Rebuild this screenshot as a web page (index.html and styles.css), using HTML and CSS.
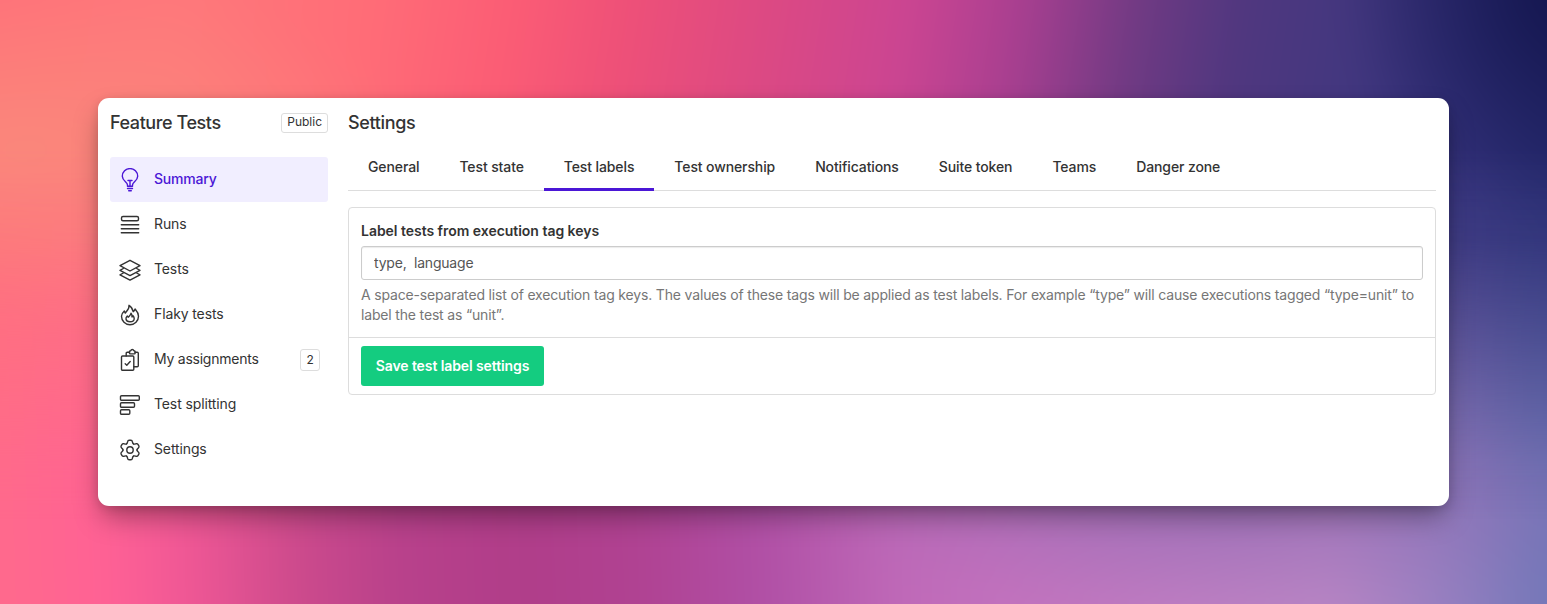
FILE: index.html
```html
<!DOCTYPE html>
<html lang="en">
<head>
<meta charset="utf-8">
<title>Feature Tests – Settings</title>
<link rel="stylesheet" href="styles.css">
</head>
<body>
<div class="page">
<div class="card">
  <aside class="sidebar">
    <div class="suite-head"><h2 class="heading suite-name">Feature Tests</h2><span class="badge">Public</span></div>
    <nav class="nav">
      <a class="nav-item active"><svg class="icon" viewBox="0 0 24 24"><path d="M9.500 18.200v-1.300c0-2.500-5.200-4.200-5.200-8.600a7.700 7.700 0 0 1 15.400 0c0 4.400-5.200 6.100-5.200 8.600v1.300z"/><path d="M10 12.500h4M12 12.500v5.700M9.500 20.500h5M10.700 22.700h2.600"/></svg><span>Summary</span></a>
      <a class="nav-item"><svg class="icon" viewBox="0 0 24 24"><rect x="3.500" y="3.500" width="17" height="4.200" rx="1.500"/><path d="M3.300 11.700h17.400M3.300 15.700h17.400M3.300 19.700h17.400"/></svg><span>Runs</span></a>
      <a class="nav-item"><svg class="icon" viewBox="0 0 24 24"><path d="M12 2.300 22 7.700 12 13 2 7.700z"/><path d="M5.300 10.500 2 12.300l10 5.300 10-5.300-3.300-1.800"/><path d="M5.300 15 2 16.800l10 5.300 10-5.300-3.300-1.800"/></svg><span>Tests</span></a>
      <a class="nav-item"><svg class="icon" viewBox="0 0 24 24"><path d="M11 2.300c.7 3.200-2.200 5.400-3.700 7.800-.5-.8-.8-1.500-1-2.200C4.500 9.500 3.500 11.500 3.500 13.300a8.500 8.500 0 0 0 17 0c0-3.600-2-5.700-3.400-7.300-.3 1.200-1 2.100-1.900 2.700C14.700 6 13.300 3.600 11 2.300z"/><path d="M13 10.300c-.1 1.600-1.700 2.500-2.700 3.900-.5-.4-.8-.7-1-1.200-1 1-1.500 2-1.300 3.100.3 1.700 1.900 2.700 4 2.700 2.400 0 4.200-1.300 4.200-3.400 0-1.200-.6-2-1.200-2.700-.2.600-.5.900-1 1.200.1-1.400-.1-2.600-1-3.600z"/></svg><span>Flaky tests</span></a>
      <a class="nav-item"><svg class="icon" viewBox="0 0 24 24"><path d="M8.200 8V5.300q0-1 1-1h2.300M17 4.300h2.300q1 0 1 1v12.500q0 1-1 1h-3.500"/><path d="M11.500 3.700c0-.6.400-1 1-1h.2c.3-.8.800-1.200 1.600-1.200s1.300.4 1.600 1.200h.2c.6 0 1 .4 1 1v1.500q0 .7-.7.700h-4.200q-.7 0-.7-.7z"/><rect x="3.500" y="8" width="12.300" height="14.200" rx="1"/><path d="m7.200 15.700 1.600 1.500 3.400-3.700"/></svg><span class="wide">My assignments</span><span class="count">2</span></a>
      <a class="nav-item"><svg class="icon" viewBox="0 0 24 24"><rect x="2.500" y="2.700" width="18.800" height="4.500" rx="1"/><rect x="2.500" y="9.700" width="14" height="4.500" rx="1"/><rect x="2.500" y="16.700" width="9.300" height="4.500" rx="1"/></svg><span>Test splitting</span></a>
      <a class="nav-item"><svg class="icon" viewBox="0 0 24 24"><circle cx="12" cy="12" r="3.200"/><path id="tooth" d="M8.500 5.940C9.400 5.400 9.400 4.500 9.600 3.700Q9.900 2.300 11.100 2.300H12.900Q14.100 2.300 14.400 3.700C14.600 4.500 14.600 5.400 15.500 5.940"/><use href="#tooth" transform="rotate(60 12 12)"/><use href="#tooth" transform="rotate(120 12 12)"/><use href="#tooth" transform="rotate(180 12 12)"/><use href="#tooth" transform="rotate(240 12 12)"/><use href="#tooth" transform="rotate(300 12 12)"/></svg><span>Settings</span></a>
    </nav>
  </aside>
  <main class="main">
    <h1 class="heading">Settings</h1>
    <nav class="tabs">
      <a class="tab">General</a><a class="tab">Test state</a><a class="tab selected">Test labels</a><a class="tab">Test ownership</a><a class="tab">Notifications</a><a class="tab">Suite token</a><a class="tab">Teams</a><a class="tab">Danger zone</a>
    </nav>
    <form class="panel">
      <div class="panel-body">
        <label class="label" for="keys">Label tests from execution tag keys</label>
        <input class="input" id="keys" type="text" value="type,  language">
        <p class="help">A space-separated list of execution tag keys. The values of these tags will be applied as test labels. For example “type” will cause executions tagged “type=unit” to label the test as “unit”.</p>
      </div>
      <div class="panel-foot"><button class="save" type="button">Save test label settings</button></div>
    </form>
  </main>
</div>
</div>
</body>
</html>
```
FILE: styles.css
```css
* { box-sizing: border-box; }
body { margin: 0; }
.page {
  width: 1547px;
  height: 604px;
  padding: 98px;
  overflow: clip;
  position: relative;
  isolation: isolate;
  font: 14px/20px Inter, "Liberation Sans", sans-serif;
  color: #333;
}
/* Two soft colour fields: ::after runs along the bottom, ::before fades down over it. */
.page::before,
.page::after {
  content: "";
  position: absolute;
  inset: -60px;
  z-index: -1;
  filter: blur(20px);
}
.page::after {
  z-index: -2;
  background:
    radial-gradient(ellipse 420px 110px at 1290px 560px, #8a66b0a0, #8a66b000),
    linear-gradient(88deg, #ff6a8c 62px, #ff6195 172px, #ef5795 252px, #cc4a8c 362px, #b8418b 462px, #b03d89 582px, #b04292 702px, #b04fa5 822px, #bf69b8 962px, #c271bd 1062px, #be7dc2 1242px, #b885c4 1392px, #9b80c1 1492px, #7477b8 1609px);
}
.page::before {
  background:
    radial-gradient(ellipse 400px 170px at 80px 210px, #fa887b, #fa887b00),
    radial-gradient(ellipse 250px 260px at 1650px 30px, #11134b 0, #13154dd0 30%, #13154d00),
    linear-gradient(99deg, #ff717a 69px, #fe787b 249px, #ff6c77 439px, #fb5c75 579px, #ee5078 689px, #dc4983 829px, #cb4592 969px, #a83f90 1079px, #703a83 1194px, #50377f 1294px, #42377f 1419px, #35327c 1519px, #292d73 1629px);
  -webkit-mask-image: linear-gradient(#000 0 210px, #000d 300px, #0007 420px, #0002 520px, transparent 580px);
  mask-image: linear-gradient(#000 0 210px, #000d 300px, #0007 420px, #0002 520px, transparent 580px);
}
.card {
  display: flex;
  gap: 20px;
  width: 1351px;
  height: 408px;
  padding: 12px 13px 0 12px;
  border-radius: 11px;
  background: #fff;
  box-shadow: 0 14px 28px -4px rgba(0,0,0,.36), 0 2px 10px rgba(0,0,0,.12);
}
.sidebar { width: 218px; }
.suite-head { display: flex; justify-content: space-between; align-items: center; height: 26px; }
.heading { margin: 0; font-size: 18px; line-height: 26px; font-weight: 500; letter-spacing: -.34px; }
.suite-name { letter-spacing: -.42px; }
.badge { height: 20px; padding: 0 5px; border: 1px solid #ddd; border-radius: 3px; font-size: 12px; line-height: 16px; }
.nav { margin-top: 21px; }
.nav-item { display: flex; align-items: center; height: 45px; padding: 0 8px; border-radius: 3px; letter-spacing: -.12px; }
.nav-item.active { background: #f1eeff; color: #4b17d6; font-weight: 500; letter-spacing: -.2px; }
.nav-item > span:nth-child(2) { margin: -1px 0 0 12px; }
.wide { letter-spacing: -.24px; }
.icon { width: 24px; height: 24px; margin-top: 1px; fill: none; stroke: currentColor; stroke-width: 1.4; stroke-linecap: round; stroke-linejoin: round; }
.count { width: 20px; height: 22px; margin-left: auto; border: 1px solid #ddd; border-radius: 3px; font-size: 12px; text-align: center; }
.main { flex: 1; min-width: 0; }
.tabs { display: flex; height: 55px; border-bottom: 1px solid #ddd; }
.tab { height: 55px; padding: 21px 20px 0; font-weight: 500; letter-spacing: -.11px; }
.selected { border-bottom: 3px solid #4b17d6; }
.panel { margin-top: 16px; height: 188px; border: 1px solid #ddd; border-radius: 4px; }
.panel-body { height: 130px; padding: 13px 12px 0; border-bottom: 1px solid #ddd; }
.label { display: block; font-weight: 600; letter-spacing: -.03px; }
.input { display: block; width: 100%; height: 34px; margin-top: 5px; padding: 0 12px 2px; border: 1px solid #ccc; border-radius: 3px; font: inherit; letter-spacing: -.2px; color: #555; box-shadow: inset 0 1px 1px rgba(0,0,0,.08); }
.help { margin: 5px 0 0; color: #767676; letter-spacing: -.165px; }
.panel-foot { padding: 8px 12px; }
.save { width: 183px; height: 40px; padding: 0; border: 0; border-radius: 3px; background: #14cc80; color: #fff; font: inherit; font-weight: 600; letter-spacing: -.1px; }
```
